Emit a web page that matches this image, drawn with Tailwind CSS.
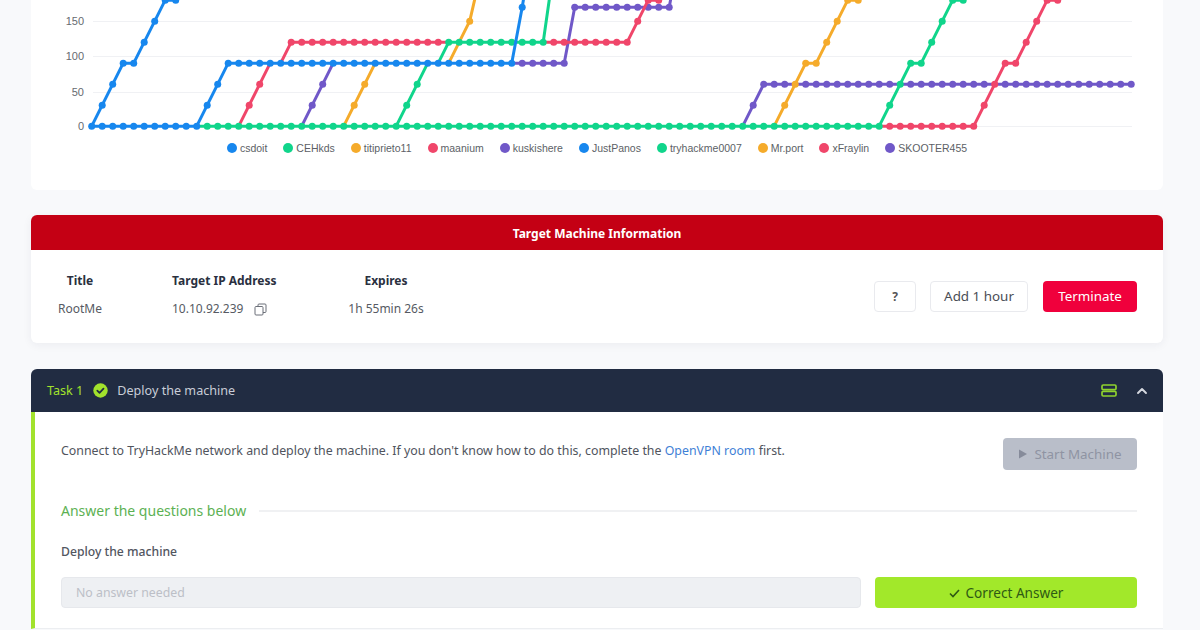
<!DOCTYPE html>
<html lang="en">
<head>
  <meta charset="UTF-8">
  <title>RootMe</title>
  <script src="https://cdn.jsdelivr.net/npm/@tailwindcss/browser@4"></script>
</head>
<body class="bg-[#f8f9fb] font-['Noto_Sans',sans-serif] text-[#4b4f58] h-[630px] overflow-hidden">
  <div class="mx-[31px] w-[1132px]">
    <!-- Chart card -->
    <div class="bg-white h-[190px] rounded-b-md">
      <svg id="chart" width="1132" height="138" viewBox="31 0 1132 138" class="block"></svg>
      <div class="flex justify-center items-center gap-[16px] mt-[3px] font-['Liberation_Sans',sans-serif] text-[10.5px] leading-[14px] text-[#5c5f66]">
        <div class="flex items-center gap-[3px]"><span class="w-[10px] h-[10px] rounded-full bg-[#1787ee]"></span>csdoit</div>
        <div class="flex items-center gap-[3px]"><span class="w-[10px] h-[10px] rounded-full bg-[#10d58b]"></span>CEHkds</div>
        <div class="flex items-center gap-[3px]"><span class="w-[10px] h-[10px] rounded-full bg-[#f5ab2b]"></span>titiprieto11</div>
        <div class="flex items-center gap-[3px]"><span class="w-[10px] h-[10px] rounded-full bg-[#f0466a]"></span>maanium</div>
        <div class="flex items-center gap-[3px]"><span class="w-[10px] h-[10px] rounded-full bg-[#7058c8]"></span>kuskishere</div>
        <div class="flex items-center gap-[3px]"><span class="w-[10px] h-[10px] rounded-full bg-[#1787ee]"></span>JustPanos</div>
        <div class="flex items-center gap-[3px]"><span class="w-[10px] h-[10px] rounded-full bg-[#10d58b]"></span>tryhackme0007</div>
        <div class="flex items-center gap-[3px]"><span class="w-[10px] h-[10px] rounded-full bg-[#f5ab2b]"></span>Mr.port</div>
        <div class="flex items-center gap-[3px]"><span class="w-[10px] h-[10px] rounded-full bg-[#f0466a]"></span>xFraylin</div>
        <div class="flex items-center gap-[3px]"><span class="w-[10px] h-[10px] rounded-full bg-[#7058c8]"></span>SKOOTER455</div>
      </div>
    </div>

    <!-- Target machine -->
    <div class="mt-[25px] bg-white rounded-md shadow-[0_2px_10px_rgba(30,40,70,0.06)] h-[128px] overflow-hidden">
      <div class="h-[35px] pt-[2px] bg-[#c40014] flex items-center justify-center text-white text-[12px] font-bold">Target Machine Information</div>
      <div class="flex items-center justify-between h-[93px] pr-[26px]">
        <div class="flex text-[12px] text-[#565a63] -mt-[3px]">
          <div class="w-[98px] text-center">
            <div class="font-bold text-[#2a3040] leading-[18px]">Title</div>
            <div class="mt-[10px] leading-[18px]">RootMe</div>
          </div>
          <div class="ml-[43px] w-[150px]">
            <div class="font-bold text-[#2a3040] leading-[18px]">Target IP Address</div>
            <div class="mt-[10px] leading-[18px] flex items-center gap-[11px]">
              10.10.92.239
              <svg width="13" height="13" viewBox="0 0 13 13" fill="none" stroke="#6b6f78" stroke-width="1"><rect x="1" y="3.5" width="8" height="8.5" rx="1"/><path d="M4 3.5V2a1 1 0 0 1 1-1h6a1 1 0 0 1 1 1v6.5a1 1 0 0 1-1 1H9"/></svg>
            </div>
          </div>
          <div class="w-[128px] text-center">
            <div class="font-bold text-[#2a3040] leading-[18px]">Expires</div>
            <div class="mt-[10px] leading-[18px]">1h 55min 26s</div>
          </div>
        </div>
        <div class="flex items-center text-[13.4px]">
          <div class="w-[42px] h-[31px] border border-[#e9eaee] rounded-[4px] flex items-center justify-center text-[12px] font-bold text-[#555]">?</div>
          <div class="ml-[14px] w-[98px] h-[31px] border border-[#e9eaee] rounded-[4px] flex items-center justify-center text-[#4a4d55]">Add 1 hour</div>
          <div class="ml-[15px] w-[94px] h-[31px] rounded-[4px] bg-[#f0003c] flex items-center justify-center text-white">Terminate</div>
        </div>
      </div>
    </div>

    <!-- Task -->
    <div class="mt-[26px] rounded-t-md bg-[#212c42] h-[43px] flex items-center pl-[16px] pr-[15px] text-[12.6px]">
      <span class="text-[#a2e22c] pt-[2px]">Task 1</span>
      <svg class="ml-[10px]" width="15" height="15" viewBox="0 0 15 15"><circle cx="7.5" cy="7.5" r="7.2" fill="#a2e22c"/><path d="M4.3 7.7l2.2 2.2 4-4.3" fill="none" stroke="#212c42" stroke-width="1.7" stroke-linecap="round" stroke-linejoin="round"/></svg>
      <span class="ml-[9px] pt-[2px] text-[#c9ced8]">Deploy the machine</span>
      <svg class="ml-auto" width="16" height="13" viewBox="0 0 16 13" fill="none" stroke="#8fd22e" stroke-width="1.7"><rect x="1" y="1" width="14" height="4.6" rx="1.2"/><rect x="1" y="7.4" width="14" height="4.6" rx="1.2"/></svg>
      <svg class="ml-[19px]" width="12" height="8" viewBox="0 0 12 8" fill="none" stroke="#d5d8df" stroke-width="1.9" stroke-linecap="round" stroke-linejoin="round"><path d="M2 6l4-4 4 4"/></svg>
    </div>
    <div class="bg-white border-l-[4px] border-[#a2e22c] border-b border-b-[#eceef1] h-[217px] pl-[26px] pr-[26px]">
      <div class="flex justify-between pt-[26px]">
        <p class="text-[12.37px] leading-[24px] mt-[1px] text-[#50545d]">Connect to TryHackMe network and deploy the machine. If you don't know how to do this, complete the <a class="text-[#3f7fd6]">OpenVPN room</a> first.</p>
        <div class="w-[134px] h-[32px] rounded-[4px] bg-[#b9bec9] flex items-center justify-center gap-[6px] text-[13.4px] text-[#8f94a3]">
          <svg width="10" height="10" viewBox="0 0 10 10" fill="#868b9a"><path d="M1 0.5l8 4.5-8 4.5z"/></svg>
          Start Machine
        </div>
      </div>
      <div class="flex items-center mt-[29px]">
        <h3 class="text-[14px] leading-[24px] text-[#5cb153]">Answer the questions below</h3>
        <div class="ml-[13px] flex-1 h-[2px] bg-[#f0f1f3]"></div>
      </div>
      <div class="mt-[19px] text-[12.2px] leading-[20px] font-medium text-[#52565f]">Deploy the machine</div>
      <div class="mt-[15px] flex">
        <div class="w-[800px] h-[31px] rounded-[4px] bg-[#eef0f3] border border-[#e6e8ec] flex items-center pl-[14px] pt-[2px] text-[12.3px] text-[#bcbfc7]">No answer needed</div>
        <div class="ml-[14px] w-[262px] h-[31px] pt-[1px] rounded-[4px] bg-[#a2e82a] flex items-center justify-center gap-[6px] text-[13.6px] text-[#2f5a14]">
          <svg width="11" height="9" viewBox="0 0 11 9" fill="none" stroke="#2f5a14" stroke-width="1.6"><path d="M1 4.5l3 3 6-6.5"/></svg>
          Correct Answer
        </div>
      </div>
    </div>
  </div>

  <script>
    const X0 = 91.7, STEP = 10.5, LAST = 99;
    const xAt = i => X0 + i * STEP;
    const yAt = v => 126.2 - v * 0.7;

    // each series: value changes as [index, value], held flat until the next one
    // listed top layer first
    const series = [
      { color: '#1787ee', steps: [[0,0],[1,30],[2,60],[3,90],[5,120],[6,150],[7,180],[9,260]] }, // csdoit
      { color: '#1787ee', steps: [[10,0],[11,30],[12,60],[13,90],[41,170],[42,260]] }, // JustPanos
      { color: '#10d58b', steps: [[29,0],[30,30],[31,60],[32,90],[34,120],[44,225]] }, // CEHkds
      { color: '#10d58b', steps: [[75,0],[76,30],[77,60],[78,90],[80,120],[81,150],[82,180],[84,260]] }, // tryhackme0007
      { color: '#f5ab2b', steps: [[65,0],[66,30],[67,60],[68,90],[70,120],[71,150],[72,180],[74,260]] }, // Mr.port
      { color: '#f0466a', steps: [[84,0],[85,30],[86,60],[87,90],[89,120],[90,150],[91,180],[93,260]] }, // xFraylin
      { color: '#f5ab2b', steps: [[24,0],[25,30],[26,60],[27,90],[35,120],[36,150],[37,215]] }, // titiprieto11
      { color: '#f0466a', steps: [[14,0],[15,30],[16,60],[17,90],[19,120],[52,150],[53,180],[55,260]] }, // maanium
      { color: '#7058c8', steps: [[20,0],[21,30],[22,60],[23,90],[46,170],[56,250]] }, // kuskishere
      { color: '#7058c8', steps: [[62,0],[63,30],[64,60]] } // SKOOTER455
    ];

    let grid = '';
    // grid and y axis
    [[0,126],[50,92],[100,56],[150,21]].forEach(([v, y]) => {
      grid += `<line x1="93" x2="1132" y1="${y + 0.5}" y2="${y + 0.5}" stroke="#f0f1f4" stroke-width="1"/>`;
      grid += `<text x="84" y="${y + 4}" text-anchor="end" font-family="Liberation Sans" font-size="11" fill="#666a70">${v}</text>`;
    });

    // skip anything a higher series already covers, so no colour fringes show through
    const taken = new Set();
    let lines = '';
    series.forEach(s => {
      const values = [];
      for (let i = 0; i <= LAST; i++) {
        let v = 0;
        s.steps.forEach(([at, val]) => { if (i >= at) v = val; });
        values.push(v);
      }
      let layer = '';
      values.forEach((v, i) => {
        if (i < LAST && !taken.has(`l${i}:${v}:${values[i + 1]}`)) {
          taken.add(`l${i}:${v}:${values[i + 1]}`);
          layer += `<line x1="${xAt(i).toFixed(1)}" y1="${yAt(v).toFixed(1)}" x2="${xAt(i + 1).toFixed(1)}" y2="${yAt(values[i + 1]).toFixed(1)}" stroke="${s.color}" stroke-width="3" stroke-linecap="round"/>`;
        }
      });
      values.forEach((v, i) => {
        if (v <= 180 && !taken.has(`p${i}:${v}`)) {
          taken.add(`p${i}:${v}`);
          layer += `<circle cx="${xAt(i).toFixed(1)}" cy="${yAt(v).toFixed(1)}" r="3.5" fill="${s.color}"/>`;
        }
      });
      lines = layer + lines;
    });
    document.getElementById('chart').innerHTML = grid + lines;
  </script>
</body>
</html>
